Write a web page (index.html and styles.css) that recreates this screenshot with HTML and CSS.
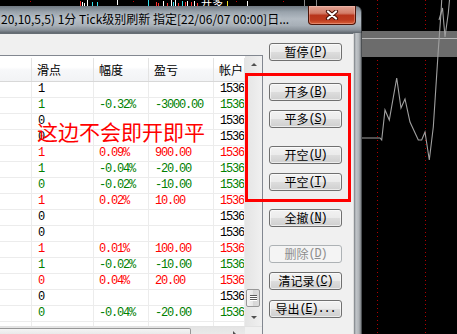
FILE: index.html
```html
<!DOCTYPE html>
<html>
<head>
<meta charset="utf-8">
<link rel="stylesheet" href="styles.css">
</head>
<body>
<div class="screen">
  <div class="left">
    <svg class="ticks" width="362" height="6" viewBox="0 0 362 6">
      <g stroke-width="1">
        <line x1="30.5" y1="1" x2="30.5" y2="2" stroke="#c00000"/>
        <line x1="80.5" y1="1" x2="80.5" y2="6" stroke="#ff3030"/>
        <line x1="82.5" y1="2" x2="82.5" y2="6" stroke="#ffffff"/>
        <line x1="84.5" y1="3" x2="84.5" y2="6" stroke="#ffffff"/>
        <line x1="87.5" y1="0" x2="87.5" y2="6" stroke="#ffffff"/>
        <line x1="92.5" y1="2" x2="92.5" y2="6" stroke="#30e0f0"/>
        <line x1="97.5" y1="2" x2="97.5" y2="6" stroke="#30e0f0"/>
        <line x1="117.5" y1="0" x2="117.5" y2="5" stroke="#ffffff"/>
        <line x1="133.5" y1="1" x2="133.5" y2="2" stroke="#c00000"/>
        <line x1="148.5" y1="0" x2="148.5" y2="6" stroke="#30e0f0"/>
        <line x1="156.5" y1="2" x2="156.5" y2="6" stroke="#ff3030"/>
        <line x1="158.5" y1="3" x2="158.5" y2="6" stroke="#ff3030"/>
        <line x1="163.5" y1="1" x2="163.5" y2="6" stroke="#ffffff"/>
        <line x1="167.5" y1="3" x2="167.5" y2="6" stroke="#ff3030"/>
        <line x1="171.5" y1="0" x2="171.5" y2="6" stroke="#ffffff"/>
        <line x1="173.5" y1="2" x2="173.5" y2="6" stroke="#30e0f0"/>
        <line x1="175.5" y1="0" x2="175.5" y2="6" stroke="#ffffff"/>
        <line x1="178.5" y1="3" x2="178.5" y2="6" stroke="#ff3030"/>
        <line x1="182.5" y1="1" x2="182.5" y2="6" stroke="#30e0f0"/>
        <line x1="185.5" y1="2" x2="185.5" y2="6" stroke="#ff3030"/>
        <line x1="187.5" y1="1" x2="187.5" y2="6" stroke="#ffffff"/>
        <line x1="191.5" y1="2" x2="191.5" y2="6" stroke="#ff3030"/>
        <line x1="194.5" y1="1" x2="194.5" y2="6" stroke="#ffffff"/>
        <line x1="197.5" y1="3" x2="197.5" y2="6" stroke="#ff3030"/>
        <line x1="227.5" y1="1" x2="227.5" y2="6" stroke="#f0e020"/>
        <line x1="236.5" y1="1" x2="236.5" y2="2" stroke="#c00000"/>
        <line x1="247.5" y1="1" x2="247.5" y2="6" stroke="#ffffff"/>
        <line x1="283.5" y1="1" x2="283.5" y2="2" stroke="#c00000"/>
        <line x1="304.5" y1="0" x2="304.5" y2="6" stroke="#8a8a8a"/>
        <line x1="316.5" y1="0" x2="316.5" y2="6" stroke="#8a8a8a"/>
      </g>
      <text x="201" y="7" fill="#ffffff" font-size="11" font-family="Noto Sans CJK SC, sans-serif">开多</text>
    </svg>
    <div class="window">
      <div class="titlebar">
        <div class="title">20,10,5,5) 1分 Tick级别刷新 指定[22/06/07 00:00]日...</div>
        <div class="close">
          <svg width="14" height="10" viewBox="0 0 14 10">
            <path d="M3 1.5 L11 8.5 M11 1.5 L3 8.5" stroke="#4a1208" stroke-width="4.2" stroke-linecap="round"/>
            <path d="M3 1.5 L11 8.5 M11 1.5 L3 8.5" stroke="#ffffff" stroke-width="2.2" stroke-linecap="round"/>
          </svg>
        </div>
      </div>
      <div class="frame">
        <div class="client">
          <div class="list">
            <div class="listmain">
              <div class="table">
                <div class="row head"><div class="c"></div><div class="c">滑点</div><div class="c">幅度</div><div class="c">盈亏</div><div class="c">帐户</div></div>
                <div class="row k"><div class="c"></div><div class="c">1</div><div class="c"></div><div class="c"></div><div class="c">1536</div></div>
                <div class="row g"><div class="c"></div><div class="c">1</div><div class="c">-0.32%</div><div class="c">-3000.00</div><div class="c">1536</div></div>
                <div class="row k"><div class="c"></div><div class="c">0</div><div class="c"></div><div class="c"></div><div class="c">1536</div></div>
                <div class="row k"><div class="c"></div><div class="c">0</div><div class="c"></div><div class="c"></div><div class="c">1536</div></div>
                <div class="row r"><div class="c"></div><div class="c">1</div><div class="c">0.09%</div><div class="c">900.00</div><div class="c">1536</div></div>
                <div class="row g"><div class="c"></div><div class="c">1</div><div class="c">-0.04%</div><div class="c">-20.00</div><div class="c">1536</div></div>
                <div class="row g"><div class="c"></div><div class="c">0</div><div class="c">-0.02%</div><div class="c">-10.00</div><div class="c">1536</div></div>
                <div class="row r"><div class="c"></div><div class="c">1</div><div class="c">0.02%</div><div class="c">10.00</div><div class="c">1536</div></div>
                <div class="row k"><div class="c"></div><div class="c">0</div><div class="c"></div><div class="c"></div><div class="c">1536</div></div>
                <div class="row k"><div class="c"></div><div class="c">0</div><div class="c"></div><div class="c"></div><div class="c">1536</div></div>
                <div class="row r"><div class="c"></div><div class="c">1</div><div class="c">0.01%</div><div class="c">100.00</div><div class="c">1536</div></div>
                <div class="row g"><div class="c"></div><div class="c">1</div><div class="c">-0.02%</div><div class="c">-10.00</div><div class="c">1536</div></div>
                <div class="row r"><div class="c"></div><div class="c">0</div><div class="c">0.04%</div><div class="c">20.00</div><div class="c">1536</div></div>
                <div class="row k"><div class="c"></div><div class="c">0</div><div class="c"></div><div class="c"></div><div class="c">1536</div></div>
                <div class="row g"><div class="c"></div><div class="c">0</div><div class="c">-0.04%</div><div class="c">-20.00</div><div class="c">1536</div></div>
                <div class="row k"><div class="c"></div><div class="c"></div><div class="c"></div><div class="c"></div><div class="c"></div></div>
              </div>
              <div class="vscroll">
                <div class="sbtn"><span class="tri-up"></span></div>
                <div class="thumb"></div>
                <div class="sbtn"><span class="tri-down"></span></div>
              </div>
            </div>
            <div class="hscroll">
              <div class="htrack">
                <div class="hthumb"></div>
                <span class="tri-right"></span>
              </div>
              <div class="corner"></div>
            </div>
          </div>
          <div class="buttons">
            <div class="btn">暂停<span class="mn">(<u>P</u>)</span></div>
            <div class="btn g22">开多<span class="mn">(<u>B</u>)</span></div>
            <div class="btn g9">平多<span class="mn">(<u>S</u>)</span></div>
            <div class="btn g18">开空<span class="mn">(<u>U</u>)</span></div>
            <div class="btn g9">平空<span class="mn">(<u>T</u>)</span></div>
            <div class="btn g18">全撤<span class="mn">(<u>N</u>)</span></div>
            <div class="btn g18 disabled">删除<span class="mn">(<u>D</u>)</span></div>
            <div class="btn g9">清记录<span class="mn">(<u>C</u>)</span></div>
            <div class="btn g10">导出<span class="mn">(<u>E</u>)...</span></div>
          </div>
        </div>
        <div class="rframe"></div>
      </div>
    </div>
  </div>
  <svg class="chart" width="95" height="334" viewBox="0 0 95 334">
    <line x1="15.5" y1="0" x2="15.5" y2="334" stroke="#b00000" stroke-dasharray="1 3"/>
    <line x1="63.5" y1="0" x2="63.5" y2="334" stroke="#b00000" stroke-dasharray="1 3"/>
    <rect x="0" y="31" width="95" height="26" fill="#6c6c6c"/>
    <line x1="0" y1="38.5" x2="95" y2="38.5" stroke="#b8b8b8"/>
    <polyline fill="none" stroke="#a0a0a0" stroke-width="1.1" points="0,138 18,138 19.7,140 23,110 27.3,120 34.7,78 39,108 43,99 48,122 56.3,140 59.7,140 63,132 67.3,160 71.3,127 76.3,50 79,13 79.7,0"/>
    <polyline fill="none" stroke="#a0a0a0" stroke-width="1.1" points="77,20 80.5,8 83,37 86.3,13 87.5,0"/>
  </svg>
  <div class="note">这边不会即开即平</div>
  <div class="redbox"></div>
</div>
</body>
</html>
```

FILE: styles.css
```css
* { box-sizing: border-box; }
html, body { margin: 0; padding: 0; }
body {
  background: #000;
  width: 457px;
  height: 334px;
  overflow: hidden;
  font-family: "Noto Sans CJK SC", sans-serif;
}
.screen {
  position: relative;
  display: flex;
  width: 457px;
  height: 334px;
  overflow: hidden;
}
.left {
  width: 362px;
  flex: none;
  display: flex;
  flex-direction: column;
}
.ticks { display: block; flex: none; }
.window {
  flex: 1;
  display: flex;
  flex-direction: column;
  min-height: 0;
}
.titlebar {
  height: 27px;
  flex: none;
  display: flex;
  align-items: flex-start;
  border-top-right-radius: 6px;
  border-right: 1px solid #3a3d40;
  background: linear-gradient(180deg, #6f7881 0%, #99a3ac 22%, #b3bbc3 48%, #a7afb7 72%, #8c949c 88%, #5f666d 100%);
}
.title {
  flex: 1;
  min-width: 0;
  padding: 3px 0 0 1px;
  font-size: 12px;
  line-height: 20px;
  color: #000;
  white-space: nowrap;
  overflow: hidden;
  text-shadow: 0 0 5px rgba(230, 236, 242, 0.7);
}
.close {
  flex: none;
  width: 48px;
  height: 19px;
  margin-right: 5px;
  display: flex;
  align-items: center;
  justify-content: center;
  border: 1px solid #4e1407;
  border-top: none;
  border-radius: 0 0 4px 4px;
  background: linear-gradient(180deg, #e2a394 0%, #d37d68 40%, #b8351b 52%, #bd3b1e 78%, #d9613a 100%);
  box-shadow: inset 0 0 0 1px rgba(255, 210, 200, 0.35);
}
.close svg { display: block; }
.frame {
  flex: 1;
  display: flex;
  min-height: 0;
}
.client {
  flex: 1;
  display: flex;
  align-items: flex-start;
  background: #f0f0f0;
  border-top: 1px solid #666d74;
  border-right: 1px solid #dcdcdc;
}
.rframe {
  width: 8px;
  flex: none;
  background: linear-gradient(90deg, #7a7f84 0%, #c2c6ca 25%, #b0b4b8 60%, #8e9296 80%, #2e3134 100%);
}
.list {
  width: 263px;
  flex: none;
  margin-top: 21px;
  display: flex;
  flex-direction: column;
  border-top: 1px solid #828790;
  border-right: 1px solid #828790;
  background: #fff;
}
.listmain {
  display: flex;
  height: 270px;
}
.table {
  width: 245px;
  height: 270px;
  overflow: hidden;
  background: #fff;
}
.row {
  display: grid;
  grid-template-columns: 32px 62px 55px 65px 31px;
  height: 16px;
  border-bottom: 1px solid #ececec;
  font-family: "Liberation Mono", monospace;
  font-size: 12px;
  letter-spacing: -1.2px;
  line-height: 15px;
}
.row .c {
  border-right: 1px solid #ececec;
  padding-left: 6px;
  white-space: nowrap;
  overflow: hidden;
}
.row .c:nth-child(3) { padding-left: 5px; }
.row.head {
  height: 26px;
  border-bottom: 1px solid #d8d8d8;
  background: linear-gradient(180deg, #ffffff 0%, #ffffff 45%, #f7f8fa 55%, #f2f3f5 100%);
  font-family: "Noto Sans CJK SC", sans-serif;
  font-size: 12px;
  letter-spacing: 0;
  line-height: 23px;
  color: #000;
  padding-top: 2px;
}
.row.head .c { border-right: 1px solid #e3e3e3; padding-left: 5px; }
.k { color: #000; }
.g { color: #008000; }
.r { color: #ff0000; }
.vscroll {
  width: 17px;
  flex: none;
  display: flex;
  flex-direction: column;
  background: linear-gradient(90deg, #e4e4e4 0%, #f0f0f0 100%);
}
.sbtn {
  height: 17px;
  flex: none;
  display: flex;
  align-items: center;
  justify-content: center;
}
.tri-up {
  width: 0; height: 0;
  border-left: 3px solid transparent;
  border-right: 3px solid transparent;
  border-bottom: 3px solid #505050;
}
.tri-down {
  width: 0; height: 0;
  border-left: 3px solid transparent;
  border-right: 3px solid transparent;
  border-top: 3px solid #505050;
}
.thumb {
  margin: auto 2px 2px 1px;
  height: 18px;
  border: 1px solid #979797;
  border-radius: 2px;
  background:
    linear-gradient(180deg, transparent 5px, #5a5a5a 5px, #5a5a5a 6px, #fff 6px, #fff 7px, #5a5a5a 7px, #5a5a5a 8px, #fff 8px, #fff 9px, #5a5a5a 9px, #5a5a5a 10px, #fff 10px, #fff 11px, transparent 11px) center / 7px 100% no-repeat,
    linear-gradient(90deg, #f4f4f4 0%, #e6e6e6 50%, #d6d6d6 51%, #dcdcdc 100%);
}
.hscroll {
  display: flex;
  height: 17px;
  border-top: 1px solid #e2e2e2;
}
.htrack {
  width: 245px;
  display: flex;
  align-items: flex-start;
  background: linear-gradient(180deg, #e4e4e4 0%, #f0f0f0 100%);
}
.hthumb {
  width: 191px;
  height: 15px;
  margin-top: 1px;
  border: 1px solid #979797;
  border-left: none;
  border-radius: 0 2px 2px 0;
  background: linear-gradient(180deg, #f4f4f4 0%, #e6e6e6 50%, #d6d6d6 51%, #dcdcdc 100%);
}
.tri-right {
  margin: 4px 0 0 42px;
  width: 0; height: 0;
  border-top: 3px solid transparent;
  border-bottom: 3px solid transparent;
  border-left: 3px solid #505050;
}
.corner { width: 17px; background: #f0f0f0; }
.buttons {
  width: 73px;
  flex: none;
  margin: 9px 0 0 6px;
  display: flex;
  flex-direction: column;
}
.btn {
  height: 18px;
  display: flex;
  align-items: center;
  justify-content: center;
  border: 1px solid #707070;
  border-radius: 3px;
  background: linear-gradient(180deg, #f2f2f2 0%, #ebebeb 48%, #dddddd 52%, #cfcfcf 100%);
  box-shadow: inset 0 0 0 1px rgba(255, 255, 255, 0.6);
  font-size: 12px;
  line-height: 16px;
  color: #000;
  white-space: nowrap;
}
.btn .mn {
  font-family: "Liberation Mono", monospace;
  font-size: 12px;
  letter-spacing: -1.2px;
}
.btn .mn u { text-underline-offset: 1px; }
.btn.g22 { margin-top: 22px; }
.btn.g9 { margin-top: 9px; }
.btn.g10 { margin-top: 10px; }
.btn.g18 { margin-top: 18px; }
.btn.disabled {
  border-color: #adb2b5;
  background: #f4f4f4;
  box-shadow: none;
  color: #8d8d8d;
}
.chart { display: block; flex: none; }
.note {
  position: absolute;
  left: 37px;
  top: 121px;
  font-size: 21px;
  line-height: 21px;
  color: #ff0000;
  white-space: nowrap;
}
.redbox {
  position: absolute;
  left: 245px;
  top: 73px;
  width: 106px;
  height: 129px;
  border: 3px solid #ff0000;
}
```
